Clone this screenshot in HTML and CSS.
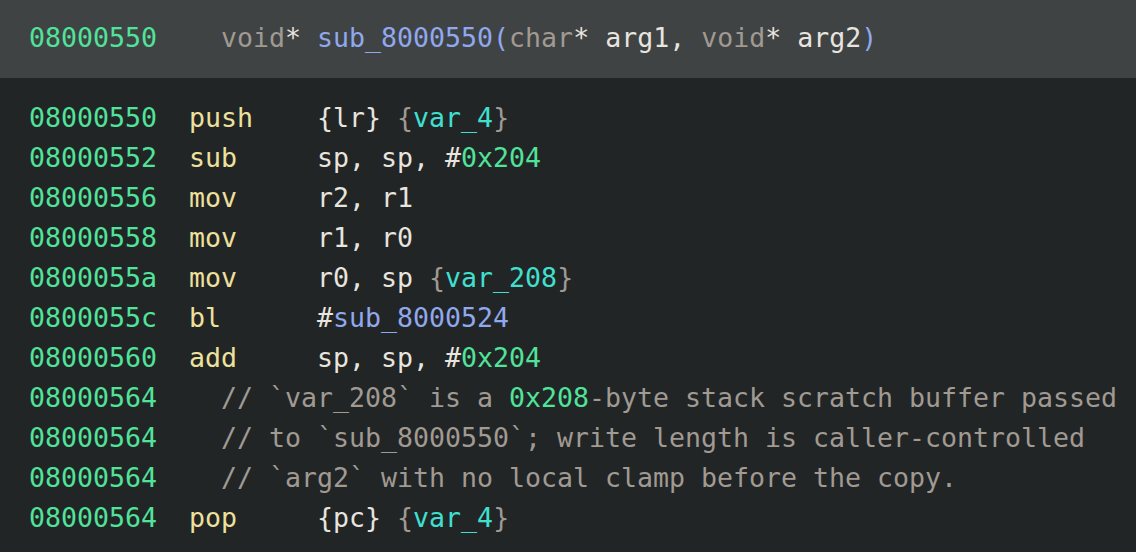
FILE: index.html
```html
<!DOCTYPE html>
<html>
<head>
<meta charset="utf-8">
<link rel="stylesheet" href="styles.css">
</head>
<body>
<div class="view">
  <div class="header">
    <div class="line"><span class="addr">08000550</span>    <span class="type">void</span><span class="tx">*</span> <span class="fn">sub_8000550(</span><span class="type">char</span><span class="tx">* arg1, </span><span class="type">void</span><span class="tx">* arg2</span><span class="fn">)</span></div>
  </div>
  <div class="body">
    <div class="line"><span class="addr">08000550</span>  <span class="op">push</span>    <span class="tx">{lr}</span> <span class="br">{</span><span class="var">var_4</span><span class="br">}</span></div>
    <div class="line"><span class="addr">08000552</span>  <span class="op">sub</span>     <span class="tx">sp, sp, #</span><span class="num">0x204</span></div>
    <div class="line"><span class="addr">08000556</span>  <span class="op">mov</span>     <span class="tx">r2, r1</span></div>
    <div class="line"><span class="addr">08000558</span>  <span class="op">mov</span>     <span class="tx">r1, r0</span></div>
    <div class="line"><span class="addr">0800055a</span>  <span class="op">mov</span>     <span class="tx">r0, sp</span> <span class="br">{</span><span class="var">var_208</span><span class="br">}</span></div>
    <div class="line"><span class="addr">0800055c</span>  <span class="op">bl</span>      <span class="tx">#</span><span class="fn">sub_8000524</span></div>
    <div class="line"><span class="addr">08000560</span>  <span class="op">add</span>     <span class="tx">sp, sp, #</span><span class="num">0x204</span></div>
    <div class="line"><span class="addr">08000564</span>    <span class="cm">// `var_208` is a </span><span class="num">0x208</span><span class="cm">-byte stack scratch buffer passed</span></div>
    <div class="line"><span class="addr">08000564</span>    <span class="cm">// to `sub_8000550`; write length is caller-controlled</span></div>
    <div class="line"><span class="addr">08000564</span>    <span class="cm">// `arg2` with no local clamp before the copy.</span></div>
    <div class="line"><span class="addr">08000564</span>  <span class="op">pop</span>     <span class="tx">{pc}</span> <span class="br">{</span><span class="var">var_4</span><span class="br">}</span></div>
  </div>
</div>
</body>
</html>
```
FILE: styles.css
```css
html, body {
  margin: 0;
  padding: 0;
  background: #222526;
}
.view {
  width: 1136px;
  height: 552px;
  overflow: hidden;
  font-family: "DejaVu Sans Mono", "Liberation Mono", monospace;
  font-size: 26.58px;
  color: #e8e4df;
}
.line {
  white-space: pre;
  height: 40px;
  line-height: 40px;
}
.header {
  background: #3f4344;
  height: 78px;
  box-sizing: border-box;
  padding: 18px 0 0 29px;
}
.body {
  padding: 20px 0 0 29px;
}
.addr { color: #50e49a; }
.op { color: #eee19c; }
.tx { color: #e8e4df; }
.br { color: #a09a93; }
.var { color: #40e0d0; }
.num { color: #50e49a; }
.fn { color: #90a8ee; }
.type { color: #a09a93; }
.cm { color: #a09a93; }
```
